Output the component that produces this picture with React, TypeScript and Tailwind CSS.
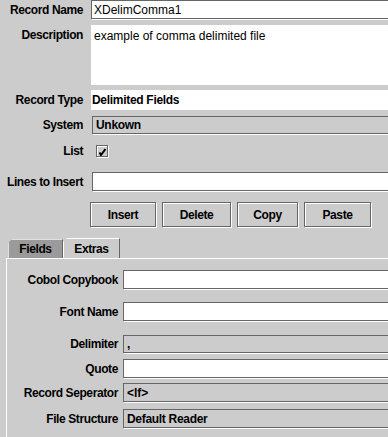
import React from "react";

const field = "shrink-0 w-[310px] h-[19px] border border-[#666] shadow-[1px_1px_0_#fff] flex items-center px-[2px]";

const Label = ({ children, w }: { children: React.ReactNode; w: string }) => (
    <div className={`${w} shrink-0 text-right font-bold tracking-[-0.4px] text-black`}>{children}</div>
);

const Btn = ({ children, w }: { children: React.ReactNode; w: string }) => (
    <button className={`${w} h-[25px] border border-[#666] shadow-[inset_1px_1px_0_#fff,1px_1px_0_#fff] bg-[#cccccc] font-bold tracking-[-0.4px] text-black`}>
        {children}
    </button>
);

export default function App() {
    return (
        <div className="w-[388px] h-[437px] overflow-hidden bg-[#cccccc] text-[12px] leading-none text-black font-['Liberation_Sans',Arial,sans-serif]">
            {/* Record header */}
            <div className="flex items-center h-[19px]">
                <Label w="w-[83px]">Record Name</Label>
                <div className={`ml-[8px] bg-white ${field}`}>XDelimComma1</div>
            </div>

            <div className="flex mt-[6px] h-[60px]">
                <Label w="w-[83px] pt-[4px]">Description</Label>
                <div className="ml-[8px] w-[310px] shrink-0 bg-white px-[3px] pt-[5px]">example of comma delimited file</div>
            </div>

            <div className="flex items-center mt-[5px] h-[20px]">
                <Label w="w-[83px]">Record Type</Label>
                <div className="ml-[8px] w-[310px] shrink-0 h-[20px] bg-white flex items-center px-[1px] font-bold tracking-[-0.3px]">
                    Delimited Fields
                </div>
            </div>

            <div className="flex items-center mt-[6px] h-[18px]">
                <Label w="w-[83px]">System</Label>
                <div className={`ml-[9px] ${field} !h-[18px] font-bold tracking-[-0.3px] px-[3px]`}>Unkown</div>
            </div>

            <div className="flex items-center mt-[10px] h-[14px]">
                <Label w="w-[83px]">List</Label>
                <div className="ml-[13px] w-[12px] h-[12px] border border-[#666] shadow-[inset_1px_1px_0_#fff,1px_1px_0_#fff] flex items-center justify-center">
                    <svg width="9" height="9" viewBox="0 0 9 9">
                        <path d="M1.5 5.5 L3 8 L7.5 2" stroke="#000" strokeWidth="2" fill="none" />
                    </svg>
                </div>
            </div>

            <div className="flex items-center mt-[14px] h-[19px]">
                <Label w="w-[83px]">Lines to Insert</Label>
                <div className={`ml-[9px] bg-white ${field}`} />
            </div>

            {/* Actions */}
            <div className="flex items-center mt-[11px] ml-[90px] gap-[6px]">
                <Btn w="w-[66px]">Insert</Btn>
                <Btn w="w-[69px]">Delete</Btn>
                <Btn w="w-[61px]">Copy</Btn>
                <Btn w="w-[67px]">Paste</Btn>
            </div>

            {/* Tabs */}
            <div className="flex items-end mt-[11px] ml-[8px] h-[20px]">
                <div className="w-[55px] h-[19px] bg-[#9a9a9a] border-t border-l border-[#e0e0e0] border-r border-r-[#666] [clip-path:polygon(4px_0,100%_0,100%_100%,0_100%,0_4px)] flex items-center justify-center font-bold tracking-[-0.4px]">
                    Fields
                </div>
                <div className="w-[57px] h-[20px] bg-[#cccccc] border-t border-l border-white border-r border-r-[#666] [clip-path:polygon(4px_0,100%_0,100%_100%,0_100%,0_4px)] flex items-center justify-center font-bold tracking-[-0.4px]">
                    Extras
                </div>
            </div>

            <div className="ml-[6px] border-t border-l border-white h-[200px] pt-[11px]">
                <div className="flex items-center h-[19px]">
                    <Label w="w-[111px]">Cobol Copybook</Label>
                    <div className={`ml-[5px] bg-white ${field}`} />
                </div>
                <div className="flex items-center mt-[13px] h-[19px]">
                    <Label w="w-[111px]">Font Name</Label>
                    <div className={`ml-[5px] bg-white ${field}`} />
                </div>
                <div className="flex items-center mt-[14px] h-[18px]">
                    <Label w="w-[111px]">Delimiter</Label>
                    <div className={`ml-[5px] ${field} !h-[18px] font-bold px-[3px]`}>,</div>
                </div>
                <div className="flex items-center mt-[6px] h-[19px]">
                    <Label w="w-[111px]">Quote</Label>
                    <div className={`ml-[5px] bg-white ${field}`} />
                </div>
                <div className="flex items-center mt-[5px] h-[19px]">
                    <Label w="w-[111px]">Record Seperator</Label>
                    <div className={`ml-[5px] ${field} font-bold px-[3px]`}>&lt;lf&gt;</div>
                </div>
                <div className="flex items-center mt-[7px] h-[19px]">
                    <Label w="w-[111px]">File Structure</Label>
                    <div className={`ml-[5px] ${field} font-bold tracking-[-0.3px] px-[3px]`}>Default Reader</div>
                </div>
            </div>
        </div>
    );
}
